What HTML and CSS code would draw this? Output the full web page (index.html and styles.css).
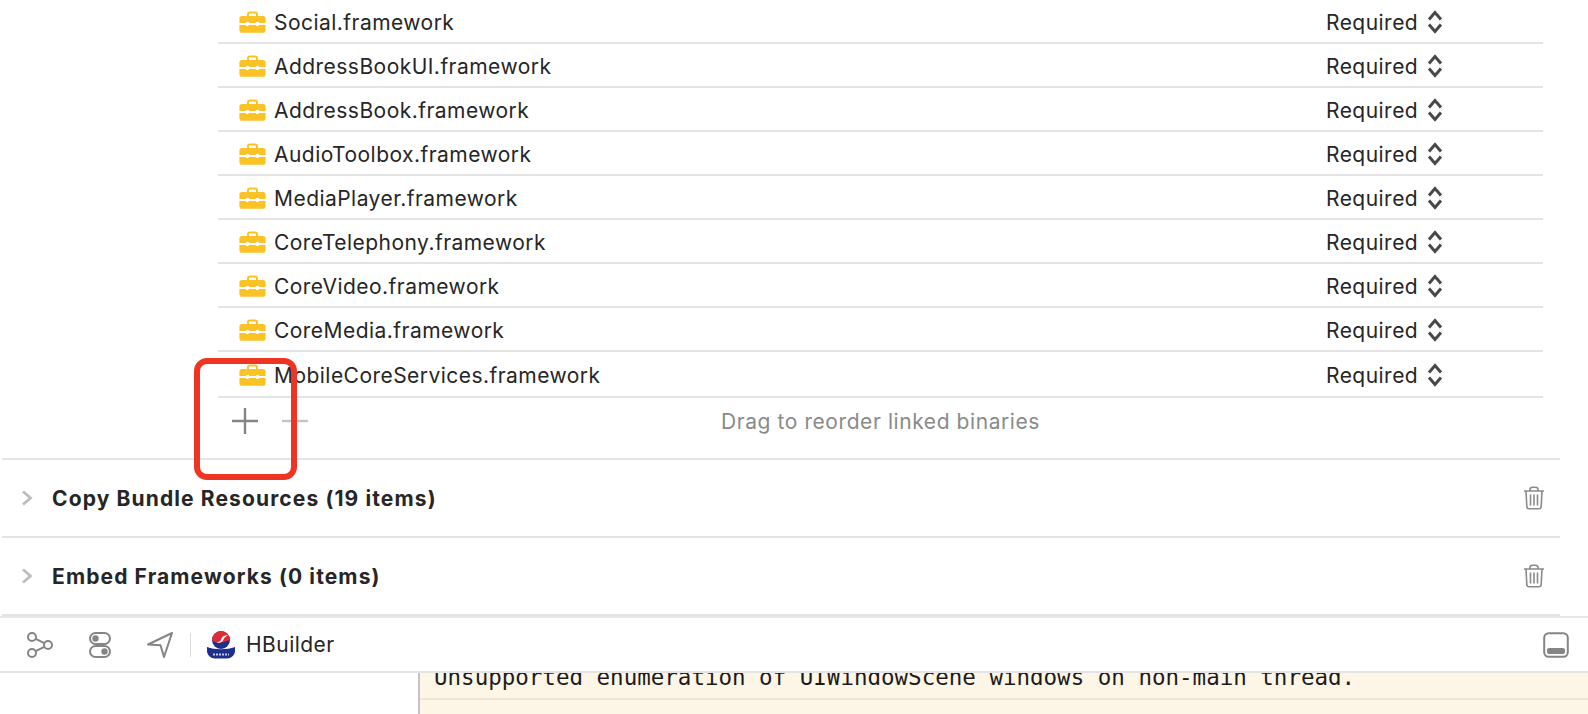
FILE: index.html
```html
<!DOCTYPE html>
<html lang="en">
<head>
<meta charset="UTF-8">
<meta name="viewport" content="width=device-width, initial-scale=1.0">
<title>Link Binary With Libraries</title>
<link rel="stylesheet" href="styles.css">
</head>

<body>

<svg class="defs" width="0" height="0">
  <symbol id="toolbox" viewBox="0 0 27 22">
    <path d="M9 6V3.500C9 2.200 9.800 1.400 11 1.400h5c1.200 0 2 .8 2 2.100V6" fill="none" stroke="#fbc226" stroke-width="2"/>
    <path d="M3 5h21c1.600 0 2.600 1 2.600 2.600V12h-6.400a2 2 0 0 0-3.600 0h-6.200a2 2 0 0 0-3.600 0H.4V7.600C.4 6 1.400 5 3 5z" fill="#fbc226"/>
    <path d="M.4 14h6.200a2 2 0 0 0 3.600 0h6.400a2 2 0 0 0 3.600 0h6.400v5.200c0 1.600-1 2.600-2.600 2.600H3c-1.600 0-2.600-1-2.600-2.600z" fill="#fbc226"/>
  </symbol>
  <symbol id="updown" viewBox="0 0 16 24">
    <path d="M2 9.500l6-7L14 9.500M2 14.500l6 7L14 14.500" fill="none" stroke="#484848" stroke-width="3"/>
  </symbol>
  <symbol id="trash" viewBox="0 0 22 24">
    <path d="M1 5h20M7 5V3.500C7 2 8 1.200 9.500 1.200h3C14 1.200 15 2 15 3.500V5M3 5l.8 15.500c.1 1.500 1 2.300 2.400 2.300h9.600c1.400 0 2.300-.8 2.400-2.300L19 5M7.500 8.500v11M11 8.500v11M14.500 8.500v11" fill="none" stroke="#8a8a8a" stroke-width="1.600"/>
  </symbol>
  <symbol id="chevron" viewBox="0 0 12 16">
    <path d="M2 1.500L9.500 8 2 14.500" fill="none" stroke="#bdbdbd" stroke-width="2.800"/>
  </symbol>
</svg>

<main class="phases">
  <div class="binary-list">
    <div class="binary-row"><svg class="toolbox"><use href="#toolbox"/></svg><span class="name">Social.framework</span><span class="status">Required</span><svg class="updown"><use href="#updown"/></svg></div>
    <div class="binary-row"><svg class="toolbox"><use href="#toolbox"/></svg><span class="name">AddressBookUI.framework</span><span class="status">Required</span><svg class="updown"><use href="#updown"/></svg></div>
    <div class="binary-row"><svg class="toolbox"><use href="#toolbox"/></svg><span class="name">AddressBook.framework</span><span class="status">Required</span><svg class="updown"><use href="#updown"/></svg></div>
    <div class="binary-row"><svg class="toolbox"><use href="#toolbox"/></svg><span class="name">AudioToolbox.framework</span><span class="status">Required</span><svg class="updown"><use href="#updown"/></svg></div>
    <div class="binary-row"><svg class="toolbox"><use href="#toolbox"/></svg><span class="name">MediaPlayer.framework</span><span class="status">Required</span><svg class="updown"><use href="#updown"/></svg></div>
    <div class="binary-row"><svg class="toolbox"><use href="#toolbox"/></svg><span class="name">CoreTelephony.framework</span><span class="status">Required</span><svg class="updown"><use href="#updown"/></svg></div>
    <div class="binary-row"><svg class="toolbox"><use href="#toolbox"/></svg><span class="name">CoreVideo.framework</span><span class="status">Required</span><svg class="updown"><use href="#updown"/></svg></div>
    <div class="binary-row"><svg class="toolbox"><use href="#toolbox"/></svg><span class="name">CoreMedia.framework</span><span class="status">Required</span><svg class="updown"><use href="#updown"/></svg></div>
    <div class="binary-row tall"><svg class="toolbox"><use href="#toolbox"/></svg><span class="name">MobileCoreServices.framework</span><span class="status">Required</span><svg class="updown"><use href="#updown"/></svg></div>
    <div class="list-footer">
      <div class="list-buttons">
        <svg class="list-btn" viewBox="0 0 28 28"><path d="M14 1v26M1 14h26" stroke="#858585" stroke-width="2.400"/></svg>
        <svg class="list-btn" viewBox="0 0 28 28"><path d="M1 14h26" stroke="#c4c4c4" stroke-width="2.400"/></svg>
      </div>
      <p class="hint">Drag to reorder linked binaries</p>
    </div>
  </div>

  <section class="phase">
    <svg class="chevron"><use href="#chevron"/></svg>
    <h2>Copy Bundle Resources (19 items)</h2>
    <svg class="trash"><use href="#trash"/></svg>
  </section>
  <section class="phase last">
    <svg class="chevron"><use href="#chevron"/></svg>
    <h2>Embed Frameworks (0 items)</h2>
    <svg class="trash"><use href="#trash"/></svg>
  </section>
</main>

<div class="debug-bar">
  <svg class="bar-icon" viewBox="0 0 28 28"><g fill="none" stroke="#858585" stroke-width="2"><circle cx="6" cy="6" r="4"/><circle cx="22" cy="14" r="4"/><circle cx="6" cy="22" r="4"/><path d="M9.600 7.800l8.800 4.400M9.600 20.200l8.800-4.400"/></g></svg>
  <svg class="bar-icon" viewBox="0 0 28 28"><g fill="none" stroke="#858585" stroke-width="2"><rect x="4" y="2" width="20" height="11" rx="5.500"/><rect x="4" y="15" width="20" height="11" rx="5.500"/></g><circle cx="9.500" cy="7.500" r="3.200" fill="#858585"/><circle cx="18.500" cy="20.500" r="3.200" fill="#858585"/></svg>
  <svg class="bar-icon" viewBox="0 0 28 28"><path d="M26 2L2 13.500l12.500.8L18 26z" fill="none" stroke="#858585" stroke-width="2" stroke-linejoin="round"/></svg>
  <span class="bar-divider"></span>
  <svg class="app-logo" viewBox="0 0 30 28">
    <circle cx="15" cy="9" r="9" fill="#1d2f8c"/>
    <path d="M6 9a9 9 0 0 1 18 0c-1 .8-3 .5-5 1.500-3 1.500-9 3-13-1.500z" fill="#dd2c38"/>
    <path d="M9.500 10.500c3 1.500 5.500 0 6-3 .6-2 3.500-3.500 7-3.500-3 1-4 2.500-5 4.500-1.500 3.500-5.500 4-8 2z" fill="#fff"/>
    <path d="M1 16c8 3 20 3 28 0v4c0 4-4 7.500-8 7.500H9c-4 0-8-3.500-8-7.500z" fill="#1d2f8c"/>
    <path d="M7 23.500h16" stroke="#c3c9e6" stroke-width="2" stroke-dasharray="2 1"/>
  </svg>
  <span class="app-name">HBuilder</span>
  <svg class="panel-toggle" viewBox="0 0 26 26"><rect x="1.200" y="1.200" width="23.600" height="23.600" rx="4.500" fill="none" stroke="#858585" stroke-width="2"/><rect x="4" y="16" width="18" height="6" rx="2" fill="#858585"/></svg>
</div>

<div class="console">
  <div class="console-gutter"></div>
  <div class="console-log">
    <div class="log-line">Unsupported enumeration of UIWindowScene windows on non-main thread.</div>
  </div>
</div>

<!-- annotation drawn on top of the screenshot -->
<div class="callout"></div>

</body>
</html>
```

FILE: styles.css
```css
* { margin: 0; padding: 0; box-sizing: border-box; }
html, body { height: 714px; overflow: hidden; }
body { font-family: 'Inter', 'Liberation Sans', sans-serif; background-color: #fff; color: #262626; position: relative; }
svg { display: block; flex: none; }
.defs { position: absolute; }

.phases { height: 616px; width: 1558px; margin-left: 2px; }

.binary-list { margin-left: 216px; width: 1325px; }
.binary-row { height: 44px; padding-top: 2px; display: flex; align-items: center; border-bottom: 2px solid #e4e4e4; font-size: 21px; letter-spacing: 0.46px; }
.binary-row.tall { height: 46px; }
.toolbox { width: 27px; height: 22px; margin-left: 21px; }
.name { margin-left: 8px; flex: 1; }
.status { width: 101px; }
.updown { width: 16px; height: 24px; margin-right: 100px; }

.list-footer { height: 60px; display: flex; position: relative; }
.list-buttons { display: flex; gap: 22px; margin-left: 13px; padding-top: 9px; }
.list-btn { width: 28px; height: 28px; }
.hint { position: absolute; left: 0; right: 0; top: 11px; text-align: center; font-size: 21px; letter-spacing: 0.58px; color: #8a8a8a; }

.phase { height: 78px; display: flex; align-items: center; border-top: 2px solid #e4e4e4; }
.phase.last { height: 80px; border-bottom: 2px solid #e4e4e4; }
.chevron { width: 12px; height: 16px; margin-left: 19px; }
.phase h2 { margin-left: 19px; flex: 1; font-size: 21px; letter-spacing: 1.12px; font-weight: 700; color: #262626; }
.trash { width: 22px; height: 24px; margin-right: 15px; }

.debug-bar { height: 57px; display: flex; align-items: center; border-top: 2px solid #e8e8e8; border-bottom: 2px solid #e4e4e4; background-color: #fff; }
.bar-icon { width: 28px; height: 28px; margin-left: 32px; }
.bar-icon:first-child { margin-left: 26px; }
.bar-divider { width: 1px; height: 24px; background-color: #dcdcdc; margin-left: 16px; }
.app-logo { width: 30px; height: 28px; margin-left: 15px; }
.app-name { font-size: 21px; letter-spacing: 0.46px; margin-left: 10px; flex: 1; }
.panel-toggle { width: 26px; height: 26px; margin-right: 19px; }

.console { height: 41px; display: flex; overflow: hidden; }
.console-gutter { width: 420px; border-right: 2px solid #c4c4c4; }
.console-log { flex: 1; background-color: #fdf5e6; }
.log-line { height: 35px; margin-top: -8px; padding-left: 14px; font-family: 'DejaVu Sans Mono', 'Liberation Mono', monospace; font-size: 22.5px; line-height: 24px; color: #1c1c1c; border-bottom: 2px solid #eee6d6; }

.callout { position: absolute; left: 194px; top: 358px; width: 103px; height: 122px; border: 6px solid #ee3524; border-radius: 13px; }
```
